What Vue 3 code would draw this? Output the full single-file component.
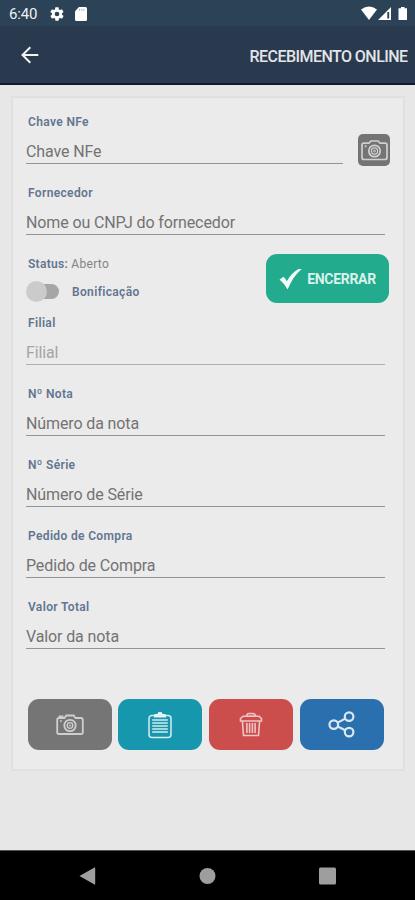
<script setup>
const topFields = [
  { label: 'Chave NFe', hint: 'Chave NFe', camera: true },
  { label: 'Fornecedor', hint: 'Nome ou CNPJ do fornecedor' },
]
const fields = [
  { label: 'Filial', hint: 'Filial', muted: true },
  { label: 'Nº Nota', hint: 'Número da nota' },
  { label: 'Nº Série', hint: 'Número de Série' },
  { label: 'Pedido de Compra', hint: 'Pedido de Compra' },
  { label: 'Valor Total', hint: 'Valor da nota' },
]
</script>

<template>
  <div class="screen">
    <div class="statusbar">
      <span class="clock">6:40</span>
      <svg class="gear" width="16" height="16" viewBox="0 0 24 24">
        <path fill="#fff" fill-rule="evenodd" d="M19.4 13c.1-.3.1-.7.1-1s0-.7-.1-1l2.1-1.6c.2-.2.3-.4.1-.6l-2-3.500c-.1-.2-.4-.3-.6-.2l-2.500 1c-.5-.4-1.100-.7-1.700-1l-.4-2.600c0-.3-.2-.5-.5-.5h-4c-.3 0-.5.200-.5.500l-.4 2.600c-.6.300-1.200.600-1.700 1l-2.500-1c-.2-.1-.5 0-.6.200l-2 3.500c-.1.200-.1.500.1.600L4.500 11c0 .3-.1.700-.1 1s0 .7.100 1l-2.100 1.600c-.2.200-.2.400-.1.600l2 3.500c.1.200.4.300.6.200l2.500-1c.5.400 1.100.7 1.700 1l.4 2.600c0 .3.200.5.500.5h4c.3 0 .5-.2.500-.5l.4-2.600c.6-.3 1.200-.6 1.700-1l2.500 1c.2.100.5 0 .6-.2l2-3.500c.1-.2.100-.5-.1-.6zM12 15.500a3.500 3.500 0 1 1 0-7 3.500 3.500 0 0 1 0 7z" />
      </svg>
      <svg class="sd" width="12" height="14" viewBox="0 0 12 14">
        <path fill="#fff" d="M4 0h6.500Q12 0 12 1.500v11Q12 14 10.500 14h-9Q0 14 0 12.500V4.200z" />
        <path stroke="#aab1b8" stroke-width="1" d="M4.500 1.800v2M6.700 1.800v2M8.900 1.800v2" />
      </svg>
      <svg class="system" width="48" height="15" viewBox="0 0 48 15">
        <path fill="#fff" d="M0 3.600Q8 -2.500 16 3.600L8 14z" />
        <path fill="#fff" fill-rule="evenodd" d="M30 1v13H17zM26.300 6v6.500h1.900V6z" />
        <path fill="#fff" d="M40 1h3.500v1.200H46V14h-8.500V2.200H40z" />
      </svg>
    </div>
    <header class="appbar">
      <svg width="19" height="18" viewBox="0 0 19 18" fill="none" stroke="#f3f3f3" stroke-width="2">
        <path d="M18.300 9H2.500M10.300 1.200 2.500 9l7.800 7.800" />
      </svg>
      <h1>RECEBIMENTO ONLINE</h1>
    </header>

    <main class="content">
      <section class="card">
        <div v-for="f in topFields" :key="f.label" class="field-row">
          <div class="field">
            <label>{{ f.label }}</label>
            <div class="input">{{ f.hint }}</div>
          </div>
          <button v-if="f.camera" class="scan">
            <svg width="27" height="21" viewBox="0 0 27 21" fill="none" stroke="#d0d0d0" stroke-width="1.700">
              <path d="M3 3.200h5L9.800 1h7.400L19 3.200h5q2 0 2 2v12.300q0 2-2 2H3q-2 0-2-2V5.200q0-2 2-2z" />
              <circle cx="13.500" cy="11" r="5.700" />
              <circle cx="13.500" cy="11" r="3.100" stroke-width="1.200" />
              <circle cx="13.500" cy="11" r="0.900" stroke-width="1" />
              <circle cx="4.600" cy="6.200" r="0.700" stroke-width="1" />
            </svg>
          </button>
        </div>

        <div class="status-row">
          <div>
            <p class="status"><b>Status:</b> Aberto</p>
            <div class="toggle">
              <span class="switch"><i></i></span>
              <span class="toggle-label">Bonificação</span>
            </div>
          </div>
          <button class="finish">
            <svg width="23" height="22" viewBox="0 0 23 22">
              <path fill="#f2fbf8" d="M.5 11.400 4.500 8.800q2 1.600 3.300 4.400Q12.500 4.600 19.500.900L22.800.900Q14 8 8.600 21.500 5.500 15.500.5 11.400z" />
            </svg>
            <span>ENCERRAR</span>
          </button>
        </div>

        <div v-for="f in fields" :key="f.label" class="field-row">
          <div class="field" :class="{ muted: f.muted }">
            <label>{{ f.label }}</label>
            <div class="input">{{ f.hint }}</div>
          </div>
        </div>

        <div class="actions">
          <button class="gray">
            <svg width="28" height="22" viewBox="0 0 28 22" fill="none" stroke="#cfcfcf" stroke-width="1.800">
              <path d="M3 4h5.500l1.800-2.500h7.400L19.500 4H25q1.800 0 1.800 1.800v12.400q0 1.800-1.800 1.800H3q-1.800 0-1.800-1.800V5.800Q1.200 4 3 4zM3.500 3.800V2.500h3v1.300" />
              <circle cx="14" cy="11.500" r="5.700" />
              <circle cx="14" cy="11.500" r="2.800" stroke-width="1.300" />
              <circle cx="14" cy="11.500" r=".7" stroke-width="1" />
              <circle cx="5" cy="7" r=".6" stroke-width="1" />
            </svg>
          </button>
          <button class="teal">
            <svg width="24" height="28" viewBox="0 0 24 28" fill="none" stroke="#d3edf1" stroke-width="1.500">
              <rect x="1" y="4.500" width="22" height="22" rx="3" />
              <path fill="#e2f4f6" stroke="none" d="M6 6.500V4.200q0-1.200 1.500-1.200h1.800Q10 .8 12 .8T14.700 3h1.800Q18 3 18 4.200v2.300z" />
              <path d="M4.200 8.900h15.600M4.200 11.900h15.600M4.200 14.900h15.600M4.200 17.900h15.600M4.200 20.900h15.600" stroke-width="1.500" />
            </svg>
          </button>
          <button class="red">
            <svg width="24" height="26" viewBox="0 0 24 26" fill="none" stroke="#f0c5c4" stroke-width="1.600">
              <path d="M1.500 9V6.500L4 4.200h16l2.500 2.300V9zM7.500 4.200Q8 1.500 10 1.500h4q2 0 2.500 2.700M9.500 4h5" />
              <path d="M3.400 9l1.100 14.500h15L20.600 9M7.900 11v10M10.600 11v10M13.400 11v10M16.100 11v10" />
            </svg>
          </button>
          <button class="blue">
            <svg width="27" height="27" viewBox="0 0 27 27" fill="none" stroke="#dbe8f3" stroke-width="2.200">
              <circle cx="5.800" cy="13.600" r="4.300" />
              <circle cx="21.100" cy="5.600" r="4.300" />
              <circle cx="21.100" cy="21.100" r="4.300" />
              <path d="m9.700 11.600 7.500-4M9.700 15.500l7.500 3.800" />
            </svg>
          </button>
        </div>
      </section>
    </main>

    <nav class="navbar">
      <svg width="17" height="18" viewBox="0 0 17 18"><path fill="#9e9e9e" d="M.5 9 15.500.500q.7-.2.700.6v15.800q0 .8-.7.600z" /></svg>
      <svg width="17" height="18" viewBox="0 0 17 18"><circle cx="8.500" cy="9" r="8" fill="#9e9e9e" /></svg>
      <svg width="17" height="18" viewBox="0 0 17 18"><rect y=".5" width="17" height="17" rx="1.500" fill="#9e9e9e" /></svg>
    </nav>
  </div>
</template>

<style>
body {
  margin: 0;
}
</style>

<style scoped>
.screen {
  width: 415px;
  height: 900px;
  display: flex;
  flex-direction: column;
  overflow: hidden;
  background: #e7e7e7;
  font-family: Roboto, "Liberation Sans", sans-serif;
}
.statusbar {
  height: 26px;
  flex: none;
  box-sizing: border-box;
  display: flex;
  align-items: center;
  padding: 1px 6px 0 9px;
  background: #2c4257;
}
.clock {
  width: 40px;
  color: #eef0f2;
  font-size: 15px;
  letter-spacing: -0.2px;
}
.sd {
  margin-left: 10px;
}
.system {
  margin-left: auto;
}
.appbar {
  height: 59px;
  flex: none;
  box-sizing: border-box;
  display: flex;
  align-items: center;
  justify-content: space-between;
  padding: 1px 7.5px 0 20px;
  background: #29394e;
  border-bottom: 2px solid #11183a;
}
h1 {
  margin: 0;
  padding-top: 2px;
  color: #e3e5e8;
  font-size: 16px;
  font-weight: 500;
  letter-spacing: -0.55px;
  white-space: nowrap;
}
.content {
  flex: 1;
  padding: 11px 10px 0 11px;
}
.card {
  height: 675px;
  box-sizing: border-box;
  padding: 16px 18px 0 13px;
  border: 2px solid #e0e0e0;
  background: #ebebeb;
}
.field-row {
  height: 71px;
  display: flex;
  justify-content: space-between;
}
.field {
  flex: 1;
}
label {
  display: block;
  padding-left: 2px;
  color: #627590;
  font-size: 12px;
  font-weight: 600;
  line-height: 16px;
  letter-spacing: 0.35px;
}
.input {
  height: 34px;
  box-sizing: border-box;
  padding-top: 11px;
  border-bottom: 1px solid #949494;
  color: #737373;
  font-size: 16px;
  line-height: 22px;
  letter-spacing: -0.12px;
}
.muted .input {
  color: #a5a5a5;
  border-bottom-color: #b0b0b0;
}
button {
  display: flex;
  align-items: center;
  justify-content: center;
  padding: 0;
  border: 0;
  font-family: inherit;
}
.scan {
  width: 32px;
  height: 32px;
  margin: 20px -5px 0 15px;
  border-radius: 5px;
  background: #747474;
}
.status-row {
  height: 59px;
  display: flex;
  justify-content: space-between;
}
.status {
  margin: 0;
  padding-left: 2px;
  color: #828282;
  font-size: 12px;
  line-height: 16px;
  letter-spacing: 0.3px;
}
.status b {
  color: #627590;
  font-weight: 600;
}
.toggle {
  height: 22px;
  margin-top: 8px;
  display: flex;
  align-items: center;
}
.switch {
  width: 31px;
  height: 15px;
  margin-left: 2px;
  display: flex;
  align-items: center;
  border-radius: 8px;
  background: #a6a6a6;
}
.switch i {
  width: 21px;
  height: 21px;
  flex: none;
  margin-left: -2px;
  border-radius: 50%;
  background: #cbcbcb;
}
.toggle-label {
  margin-left: 13px;
  padding-top: 1px;
  color: #627590;
  font-size: 12px;
  font-weight: 600;
  letter-spacing: 0.35px;
}
.finish {
  width: 123px;
  height: 49px;
  margin: -2px -4px 0 0;
  gap: 5px;
  border-radius: 11px;
  background: #22ab8d;
  color: #d9f2ec;
  font-size: 14px;
  font-weight: 700;
  letter-spacing: -0.3px;
}
.actions {
  margin: 29px 1px 0 1.5px;
  display: flex;
  justify-content: space-between;
}
.actions button {
  width: 84px;
  height: 51px;
  border-radius: 11px;
}
.gray { background: #757575; }
.teal { background: #1797ad; }
.red { background: #cb4e4c; }
.blue { background: #2b70ae; }
.navbar {
  height: 50px;
  flex: none;
  box-sizing: border-box;
  display: flex;
  align-items: center;
  justify-content: space-between;
  padding: 0 79px;
  background: #000;
  border-top: 1px solid #555;
}
</style>
